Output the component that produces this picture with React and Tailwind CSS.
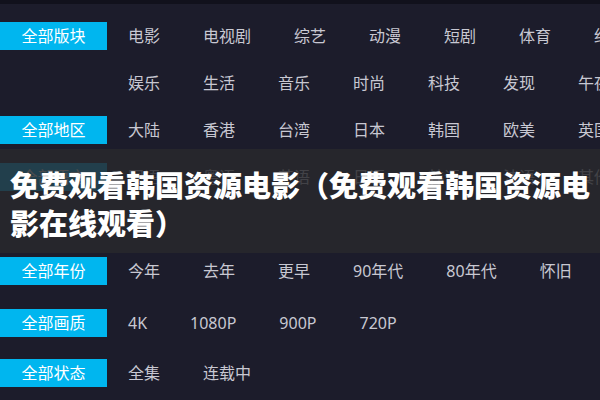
const font = { fontFamily: '"Noto Sans", "Noto Sans CJK SC", sans-serif' };

const rows = [
  {
    label: "全部版块",
    lines: [
      ["电影", "电视剧", "综艺", "动漫", "短剧", "体育", "纪录片"],
      ["娱乐", "生活", "音乐", "时尚", "科技", "发现", "午夜"],
    ],
    h: "h-[47px]",
  },
  {
    label: "全部地区",
    lines: [["大陆", "香港", "台湾", "日本", "韩国", "欧美", "英国"]],
    h: "h-[47px]",
  },
  {
    label: "全部语言",
    lines: [["国语", "粤语", "英语", "日语", "韩语", "法语", "其他"], []],
    h: "h-[47px]",
  },
  {
    label: "全部年份",
    lines: [["今年", "去年", "更早", "90年代", "80年代", "怀旧"]],
    h: "h-[48px]",
  },
  {
    label: "全部画质",
    lines: [["4K", "1080P", "900P", "720P"]],
    h: "h-[50px]",
    mt: "mt-[3px]",
  },
  {
    label: "全部状态",
    lines: [["全集", "连载中"]],
    h: "h-[50px]",
  },
];

function FilterRow({ row }) {
  return (
    <div className={`flex ${row.mt || ""}`}>
      <div className={`w-[107px] shrink-0 ${row.h} flex items-center`}>
        <div className="w-full h-[28px] bg-[#00b6ef] text-white text-[16px] leading-[28px] text-center">
          {row.label}
        </div>
      </div>
      <div className="ml-[21px] flex flex-col">
        {row.lines.map((line, i) => (
          <div key={i} className={`flex whitespace-nowrap ${row.h} items-center`}>
            {line.map((item) => (
              <span key={item} className="mr-[43px] text-[16px] text-[#c8c8d2]">
                {item}
              </span>
            ))}
          </div>
        ))}
      </div>
    </div>
  );
}

export default function App() {
  return (
    <div
      className="relative w-[600px] h-[400px] overflow-hidden bg-[#1c1c2b]"
      style={font}
    >
      <div className="h-[4px] bg-[#11111c]" />
      <div className="pt-[8px] flex flex-col">
        {rows.map((row) => (
          <FilterRow key={row.label} row={row} />
        ))}
      </div>

      {/* title banner over the list */}
      <div className="absolute left-0 right-0 top-[149px] h-[104px] bg-[rgba(40,40,44,0.84)]">
        <h1
          className="pl-[10px] pt-[16px] text-[29px] leading-[38px] font-black text-white"
          style={{ fontFamily: '"Noto Sans CJK SC", sans-serif' }}
        >
          免费观看韩国资源电影（免费观看韩国资源电影在线观看）
        </h1>
      </div>
    </div>
  );
}
